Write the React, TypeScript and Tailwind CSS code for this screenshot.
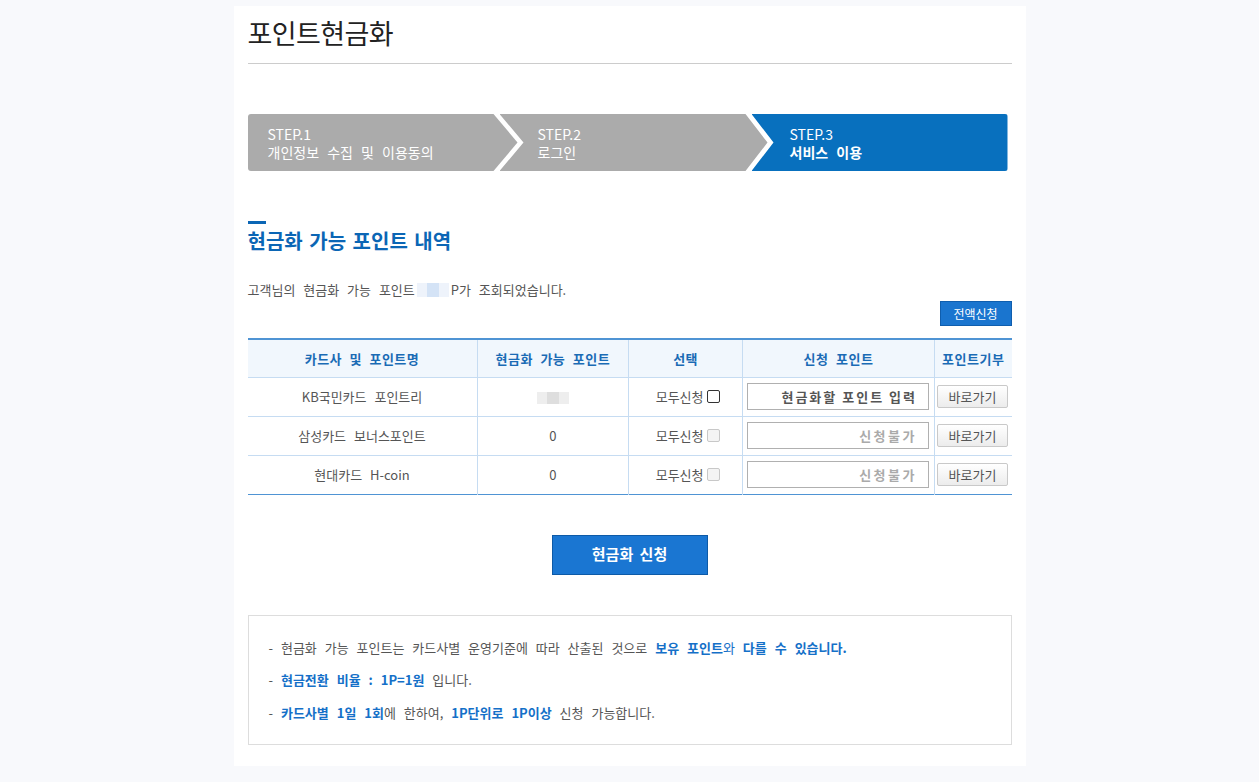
import React from "react";

const font = { fontFamily: '"Noto Sans CJK KR", "Noto Sans", sans-serif' };

function Blur({ w, tone }: { w: number; tone: "gray" | "blue" }) {
  return (
    <span className="inline-flex items-center align-middle mx-[2px]" style={{ width: w }}>
      {tone === "gray" ? (
        <>
          <span className="h-[12px] w-[10px] bg-[#eeeeee]" />
          <span className="h-[12px] w-[12px] bg-[#dedede]" />
          <span className="h-[12px] w-[10px] bg-[#eeeeee]" />
        </>
      ) : (
        <>
          <span className="h-[14px] w-[10px] bg-[#eef3fb]" />
          <span className="h-[14px] w-[12px] bg-[#d4e3f6]" />
          <span className="h-[14px] w-[10px] bg-[#eef3fb]" />
        </>
      )}
    </span>
  );
}

function Checkbox({ disabled }: { disabled?: boolean }) {
  return (
    <span
      className={
        "inline-block w-[13px] h-[13px] rounded-[2px] border align-middle ml-[2px] " +
        (disabled ? "border-[#c8c8c8] bg-[#f4f4f4]" : "border-[#333] bg-white")
      }
    />
  );
}

function GoBtn() {
  return (
    <button className="w-[71px] h-[23px] border border-[#c9c9c9] rounded-[2px] bg-gradient-to-b from-[#ffffff] to-[#ececec] text-[13px] text-[#555]">
      바로가기
    </button>
  );
}

export default function App() {
  const rows = [
    { name: "KB국민카드 포인트리", point: null, active: true },
    { name: "삼성카드 보너스포인트", point: "0", active: false },
    { name: "현대카드 H-coin", point: "0", active: false },
  ];
  const th = "border-b border-[#c6dcf2] font-bold [word-spacing:4px] tracking-[0.5px]";
  return (
    <div className="min-h-screen bg-[#f8f9fc] flex justify-center" style={font}>
      <div className="w-[792px] bg-white mt-[6px] mb-[16px] px-[14px] pb-[21px]">
        <div className="pt-[10px] pb-[13px] border-b border-[#cccccc]">
          <h1 className="text-[27px] leading-[34px] text-[#222] tracking-[-0.6px]">포인트현금화</h1>
        </div>

        <div className="mt-[50px] flex h-[57px] w-[760px] rounded-[3px] overflow-hidden text-white text-[14px] leading-[18px] [word-spacing:5px]">
          <div
            className="w-[270px] shrink-0 bg-[#ababab] flex flex-col justify-center pl-[20px]"
            style={{ clipPath: "polygon(0 0, 246px 0, 270px 50%, 246px 100%, 0 100%)" }}
          >
            <span>STEP.1</span>
            <span>개인정보 수집 및 이용동의</span>
          </div>
          <div
            className="w-[268px] shrink-0 -ml-[18px] bg-[#ababab] flex flex-col justify-center pl-[38px]"
            style={{ clipPath: "polygon(0 0, 246px 0, 268px 50%, 246px 100%, 0 100%, 24px 50%)" }}
          >
            <span>STEP.2</span>
            <span>로그인</span>
          </div>
          <div
            className="flex-1 -ml-[16px] bg-[#0870be] flex flex-col justify-center pl-[38px]"
            style={{ clipPath: "polygon(0 0, 100% 0, 100% 100%, 0 100%, 22px 50%)" }}
          >
            <span>STEP.3</span>
            <span className="font-bold">서비스 이용</span>
          </div>
        </div>

        <div className="mt-[50px] w-[18px] h-[3px] bg-[#0b66b5]" />
        <h2 className="mt-[5px] text-[20px] leading-[24px] font-bold text-[#0b66b5] [word-spacing:2px]">
          현금화 가능 포인트 내역
        </h2>

        <p className="mt-[27px] text-[13px] leading-[20px] text-[#555] [word-spacing:5px] flex items-center">
          고객님의 현금화 가능 포인트 <Blur w={32} tone="blue" />P가 조회되었습니다.
        </p>

        <div className="flex justify-end mt-[1px]">
          <button className="w-[72px] h-[25px] bg-[#1a75cf] border border-[#0f5eae] text-white text-[12px]">
            전액신청
          </button>
        </div>

        <table className="mt-[12px] w-full border-collapse border-t-2 border-b border-t-[#4f94d4] border-b-[#4f94d4] text-[13px] text-[#555]">
          <colgroup>
            <col className="w-[230px]" />
            <col className="w-[152px]" />
            <col className="w-[114px]" />
            <col className="w-[192px]" />
            <col className="w-[77px]" />
          </colgroup>
          <thead>
            <tr className="h-[38px] bg-[#f1f7fd] text-[#1a6bb5]">
              <th className={th + " border-r"}>카드사 및 포인트명</th>
              <th className={th + " border-r"}>현금화 가능 포인트</th>
              <th className={th + " border-r"}>선택</th>
              <th className={th + " border-r"}>신청 포인트</th>
              <th className={th}>포인트기부</th>
            </tr>
          </thead>
          <tbody>
            {rows.map((r, i) => (
              <tr key={i} className="h-[39px]">
                <td className={"text-center border-r border-[#c6dcf2] [word-spacing:5px] " + (i < 2 ? "border-b" : "")}>{r.name}</td>
                <td className={"text-center border-r border-[#c6dcf2] " + (i < 2 ? "border-b" : "")}>
                  {r.point === null ? <Blur w={32} tone="gray" /> : r.point}
                </td>
                <td className={"text-center border-r border-[#c6dcf2] pl-[4px] " + (i < 2 ? "border-b" : "")}>
                  <span className="inline-flex items-center gap-[1px]">
                    모두신청
                    <Checkbox disabled={!r.active} />
                  </span>
                </td>
                <td className={"border-r border-[#c6dcf2] pl-[4px] " + (i < 2 ? "border-b" : "")}>
                  <div className="w-[182px] h-[27px] border border-[#b0b0b0] flex items-center justify-end pr-[11px]">
                    {r.active ? (
                      <span className="font-bold text-[#555] tracking-[2px]">현금화할 포인트 입력</span>
                    ) : (
                      <span className="font-bold text-[#aaa] tracking-[2.5px]">신청불가</span>
                    )}
                  </div>
                </td>
                <td className={"border-[#c6dcf2] pl-[2px] " + (i < 2 ? "border-b" : "")}>
                  <GoBtn />
                </td>
              </tr>
            ))}
          </tbody>
        </table>

        <div className="flex justify-center mt-[40px]">
          <button className="w-[156px] h-[40px] bg-[#1a76d2] border border-[#0d5aa7] text-white text-[15px] font-bold [word-spacing:3px]">
            현금화 신청
          </button>
        </div>

        <div className="mt-[40px] border border-[#dddddd] pt-[22px] pb-[21px] pl-[20px] flex flex-col gap-[12.5px] text-[13px] leading-[20px] text-[#555] [word-spacing:5px]">
          <p>
            - 현금화 가능 포인트는 카드사별 운영기준에 따라 산출된 것으로{" "}
            <span className="text-[#1570c8] font-bold">보유 포인트</span>
            <span className="text-[#1570c8]">와</span>{" "}
            <span className="text-[#1570c8] font-bold">다를 수 있습니다.</span>
          </p>
          <p>
            - <span className="text-[#1570c8] font-bold">현금전환 비율 : 1P=1원</span> 입니다.
          </p>
          <p>
            - <span className="text-[#1570c8] font-bold">카드사별 1일 1회</span>에 한하여,{" "}
            <span className="text-[#1570c8] font-bold">1P단위로 1P이상</span> 신청 가능합니다.
          </p>
        </div>
      </div>
    </div>
  );
}
